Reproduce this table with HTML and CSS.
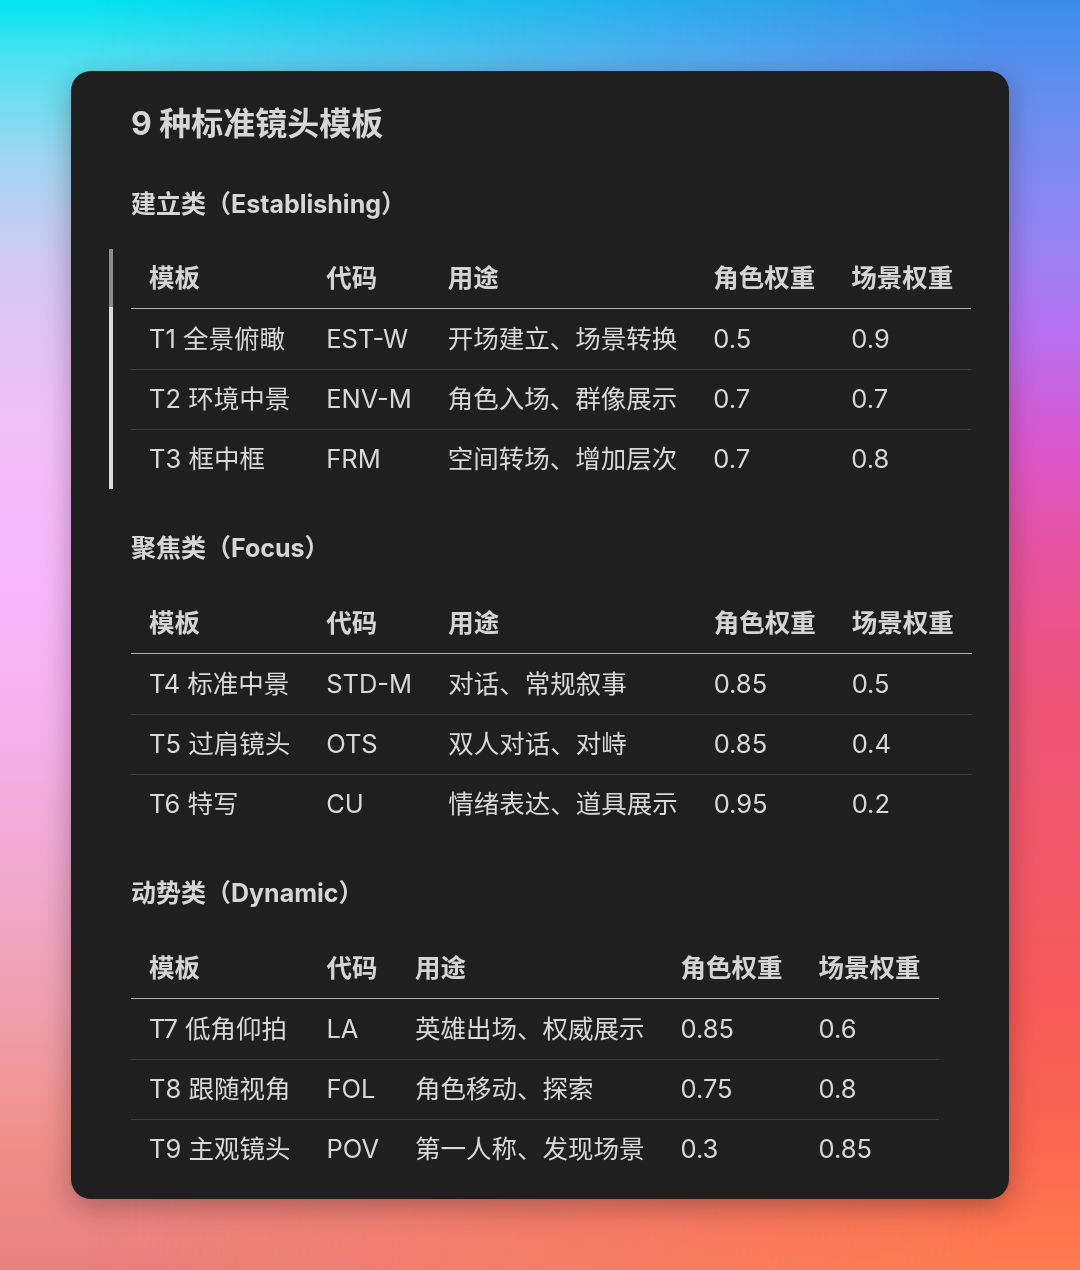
FILE: index.html
```html
<!DOCTYPE html>
<html lang="zh-CN">
<head>
<meta charset="utf-8">
<title>9 种标准镜头模板</title>
<link rel="stylesheet" href="styles.css">
</head>
<body>
<div class="card">
  <h1 class="title">9 种标准镜头模板</h1>

  <h2 class="section first">建立类（Establishing）</h2>
  <div class="table-wrap marked">
    <table class="shots">
      <thead>
        <tr><th>模板</th><th>代码</th><th>用途</th><th>角色权重</th><th>场景权重</th></tr>
      </thead>
      <tbody>
        <tr><td>T1 全景俯瞰</td><td>EST-W</td><td>开场建立、场景转换</td><td>0.5</td><td>0.9</td></tr>
        <tr><td>T2 环境中景</td><td>ENV-M</td><td>角色入场、群像展示</td><td>0.7</td><td>0.7</td></tr>
        <tr><td>T3 框中框</td><td>FRM</td><td>空间转场、增加层次</td><td>0.7</td><td>0.8</td></tr>
      </tbody>
    </table>
  </div>

  <h2 class="section">聚焦类（Focus）</h2>
  <div class="table-wrap">
    <table class="shots">
      <thead>
        <tr><th>模板</th><th>代码</th><th>用途</th><th>角色权重</th><th>场景权重</th></tr>
      </thead>
      <tbody>
        <tr><td>T4 标准中景</td><td>STD-M</td><td>对话、常规叙事</td><td>0.85</td><td>0.5</td></tr>
        <tr><td>T5 过肩镜头</td><td>OTS</td><td>双人对话、对峙</td><td>0.85</td><td>0.4</td></tr>
        <tr><td>T6 特写</td><td>CU</td><td>情绪表达、道具展示</td><td>0.95</td><td>0.2</td></tr>
      </tbody>
    </table>
  </div>

  <h2 class="section">动势类（Dynamic）</h2>
  <div class="table-wrap">
    <table class="shots">
      <thead>
        <tr><th>模板</th><th>代码</th><th>用途</th><th>角色权重</th><th>场景权重</th></tr>
      </thead>
      <tbody>
        <tr><td>T7 低角仰拍</td><td>LA</td><td>英雄出场、权威展示</td><td>0.85</td><td>0.6</td></tr>
        <tr><td>T8 跟随视角</td><td>FOL</td><td>角色移动、探索</td><td>0.75</td><td>0.8</td></tr>
        <tr><td>T9 主观镜头</td><td>POV</td><td>第一人称、发现场景</td><td>0.3</td><td>0.85</td></tr>
      </tbody>
    </table>
  </div>
</div>
</body>
</html>
```

FILE: styles.css
```css
html {
  min-height: 100%;
  background: linear-gradient(to bottom,
    #00e4f0 0px,
    #4ee2f0 60px,
    #a2d6f2 160px,
    #d2c8f2 260px,
    #f0c0f8 420px,
    #f8b6fa 600px,
    #f4b0e6 760px,
    #f0a8cc 880px,
    #f0a0b2 1000px,
    #f09088 1140px,
    #e88080 1270px);
}

body {
  margin: 0;
  min-height: 1270px;
  box-sizing: border-box;
  padding: 71px 0 72px;
  font-family: Inter, "Noto Sans CJK SC", "Noto Sans", sans-serif;
  color: #d8d8d8;
}

body::before {
  content: "";
  position: fixed;
  inset: 0;
  z-index: -1;
  background: linear-gradient(to bottom,
    #3a8ee8 0px,
    #6a8ef0 110px,
    #9a82f2 250px,
    #b670f0 330px,
    #da58d0 440px,
    #e8529c 560px,
    #ec5478 700px,
    #f25868 860px,
    #f85a5a 1000px,
    #fb6650 1140px,
    #ff7c50 1270px);
  -webkit-mask-image: linear-gradient(to right, transparent 8%, #000 92%);
  mask-image: linear-gradient(to right, transparent 8%, #000 92%);
}

.card {
  width: 938px;
  margin: 0 auto;
  box-sizing: border-box;
  padding: 31px 60px 20px;
  background: #1f1f1f;
  border-radius: 20px;
  box-shadow: 0 8px 28px rgba(40, 20, 30, 0.35);
}

.title {
  margin: 0;
  font-size: 32px;
  line-height: 44px;
  font-weight: 700;
  color: #d6d6d6;
}

.section {
  margin: 41px 0 28px;
  font-size: 25px;
  line-height: 36px;
  font-weight: 700;
  color: #d6d6d6;
}

.section.first {
  margin-top: 40px;
  margin-bottom: 27px;
}

.table-wrap.marked {
  margin-left: -22px;
  padding-left: 18px;
  border-left: 4px solid #dcdcdc;
  border-image: linear-gradient(to bottom, #8c8c8c 0, #8c8c8c 59px, #dcdcdc 59px, #dcdcdc 100%) 1;
}

.shots {
  border-collapse: collapse;
  border-spacing: 0;
  font-size: 25.5px;
}

.shots th,
.shots td {
  text-align: left;
  white-space: nowrap;
  line-height: 38px;
  padding: 11px 18px;
}

.shots th {
  padding-top: 10px;
  font-weight: 700;
  color: #d4d4d4;
  border-bottom: 1px solid #b4b4b4;
}

.shots td {
  font-weight: 400;
  color: #d8d8d8;
}

.shots tbody tr + tr td {
  padding-top: 10px;
  border-top: 1px solid #3e3e3e;
}
```
